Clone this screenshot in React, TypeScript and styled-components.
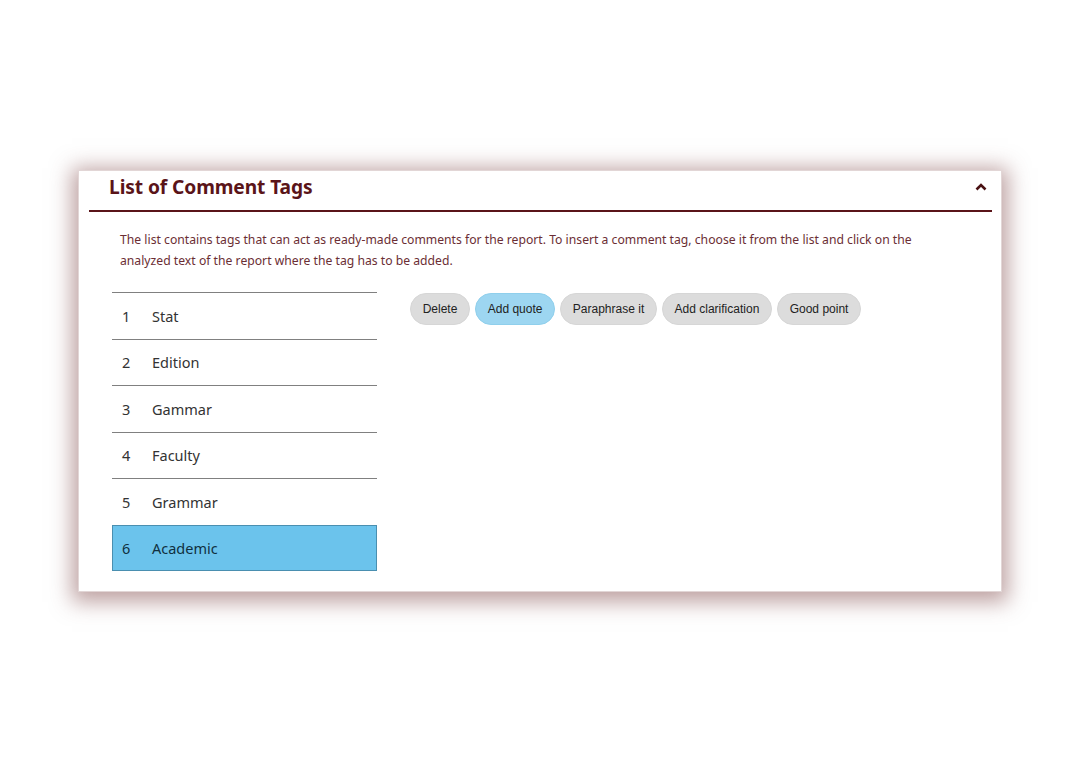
import { createGlobalStyle, styled } from 'styled-components';

const GlobalStyle = createGlobalStyle`
  html, body {
    margin: 0;
    padding: 0;
    background: #ffffff;
  }
  body {
    font-family: 'Noto Sans', 'Open Sans', sans-serif;
  }
`;

const tags = ['Stat', 'Edition', 'Gammar', 'Faculty', 'Grammar', 'Academic'];
const actions = ['Delete', 'Add quote', 'Paraphrase it', 'Add clarification', 'Good point'];

const App = (): JSX.Element => (
  <Page>
    <GlobalStyle />
    <Card>
      <Header>
        <Title>List of Comment Tags</Title>
        <Chevron width="14" height="10" viewBox="0 0 14 10">
          <path d="M2.5 7.5 L7 3 L11.5 7.5" fill="none" stroke="#4a1214" strokeWidth="2.6" />
        </Chevron>
      </Header>
      <Rule />
      <Description>
        The list contains tags that can act as ready-made comments for the report. To insert a comment
        tag, choose it from the list and click on the analyzed text of the report where the tag has to be
        added.
      </Description>
      <Body>
        <TagList>
          {tags.map((tag, i) => (
            <TagRow key={tag} $selected={i === 5}>
              <TagNum>{i + 1}</TagNum>
              <span>{tag}</span>
            </TagRow>
          ))}
        </TagList>
        <Actions>
          {actions.map((a) => (
            <Pill key={a} $active={a === 'Add quote'}>
              {a}
            </Pill>
          ))}
        </Actions>
      </Body>
    </Card>
  </Page>
);

export default App;

const Page = styled.div`
  display: flex;
  justify-content: center;
  padding-top: 170px;
  height: 763px;
  box-sizing: border-box;
`;

const Card = styled.div`
  width: 924px;
  height: 422px;
  box-sizing: border-box;
  background: #ffffff;
  border: 1px solid #e2d6d6;
  box-shadow: 0 4px 20px 6px rgba(125, 70, 70, 0.5);
  padding: 0 9px 0 10px;
`;

const Header = styled.div`
  display: flex;
  align-items: center;
  justify-content: space-between;
  height: 39px;
  box-sizing: border-box;
  padding: 0 4px 8px 20px;
`;

const Title = styled.h2`
  margin: 0;
  font-size: 19.2px;
  font-weight: 700;
  color: #5a1419;
  letter-spacing: -0.1px;
`;

const Chevron = styled.svg`
  display: block;
`;

const Rule = styled.div`
  height: 2px;
  background: #5a1419;
`;

const Description = styled.p`
  margin: 17px 0 0 31px;
  width: 810px;
  font-size: 12.2px;
  line-height: 21px;
  color: #6b2e34;
`;

const Body = styled.div`
  display: flex;
  gap: 33px;
  margin: 21px 0 0 23px;
`;

const TagList = styled.div`
  width: 265px;
  display: flex;
  flex-direction: column;
`;

const TagRow = styled.div<{ $selected?: boolean }>`
  display: flex;
  align-items: center;
  height: 46.5px;
  box-sizing: border-box;
  padding-left: ${(p) => (p.$selected ? '9px' : '10px')};
  font-size: 14.5px;
  color: ${(p) => (p.$selected ? '#10303f' : '#333333')};
  border-top: 1.5px solid #808080;
  background: ${(p) => (p.$selected ? '#6bc3ec' : 'transparent')};
  ${(p) => (p.$selected ? 'border: 1px solid #4a8fb0;' : '')}
`;

const TagNum = styled.span`
  width: 30px;
`;

const Actions = styled.div`
  display: flex;
  align-items: flex-start;
  gap: 5px;
  padding-top: 1px;
`;

const Pill = styled.button<{ $active?: boolean }>`
  height: 32px;
  padding: 0 11.7px;
  border-radius: 16px;
  border: 1px solid ${(p) => (p.$active ? '#8fcfec' : '#d6d6d6')};
  background: ${(p) => (p.$active ? '#9dd6f1' : '#dcdcdc')};
  font-family: 'Liberation Sans', Arial, sans-serif;
  font-size: 12px;
  color: #222222;
  cursor: pointer;
`;
